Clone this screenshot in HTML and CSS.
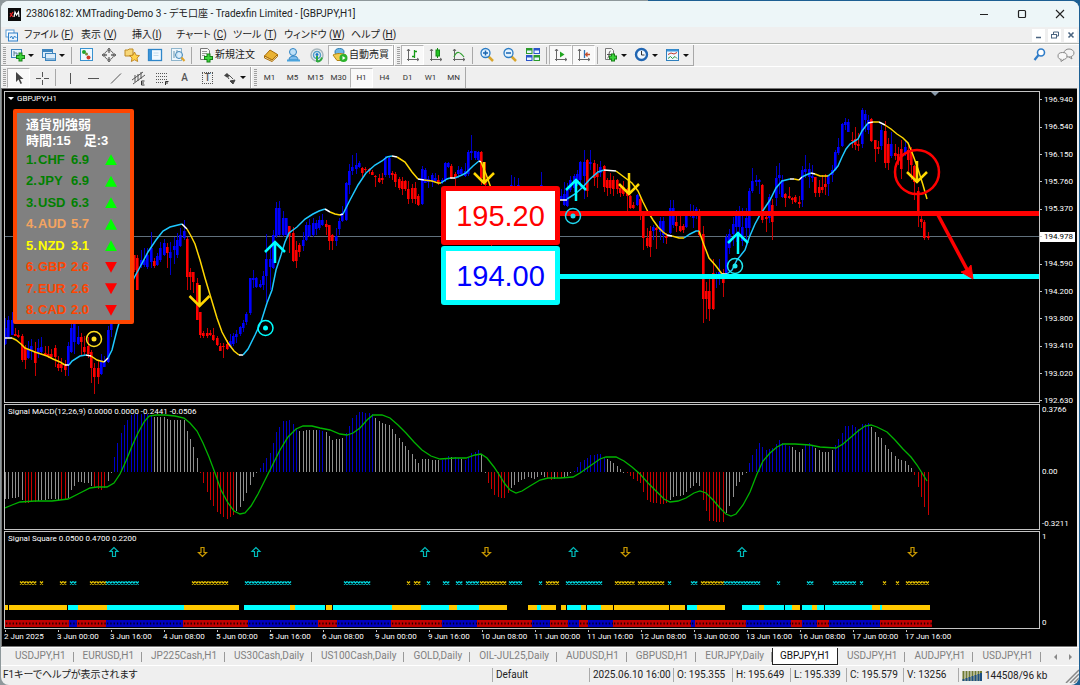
FILE: index.html
```html
<!DOCTYPE html>
<html lang="ja">
<head>
    <meta charset="UTF-8">
    <meta name="viewport" content="width=device-width, initial-scale=1.0">
    <title>23806182: XMTrading-Demo 3</title>
    <link rel="stylesheet" href="styles.css">
</head>
<body>

<div class="window">

    <header class="titlebar">
        <svg class="logo" width="13" height="13" viewBox="0 0 13 13"><rect width="13" height="13" fill="#0a0a0a"/><path d="M2 5l3 4M5 4L2 9" stroke="#e22" stroke-width="1.2"/><path d="M6 9l1-5 1.500 3L10.500 4l.5 5" stroke="#fff" stroke-width="1.2" fill="none"/></svg>
        <h1>23806182: XMTrading-Demo 3 - デモ口座 - Tradexfin Limited - [GBPJPY,H1]</h1>
        <div class="window-buttons">
            <button aria-label="Minimize"><svg width="10" height="10"><path d="M1 5.500h8" stroke="#222"/></svg></button>
            <button aria-label="Maximize"><svg width="10" height="10"><rect x="1.500" y="1.500" width="7" height="7" rx="1" fill="none" stroke="#222" stroke-width="1.200"/></svg></button>
            <button aria-label="Close"><svg width="10" height="10"><path d="M1 1l8 8M9 1L1 9" stroke="#222" stroke-width="1.100"/></svg></button>
        </div>
    </header>

    <nav class="menubar">
        <svg class="menu-icon" width="13" height="13" viewBox="0 0 13 13"><rect x="1" y="1" width="8" height="7" fill="#fff" stroke="#5b9bd5"/><rect x="3.500" y="4" width="9" height="8" fill="#e8f3fd" stroke="#2f7fc8"/><path d="M5 9l1.500-2L8 10l1.500-3 2 2" fill="none" stroke="#2f7fc8"/></svg>
        <button class="m-file">ファイル (<u>F</u>)</button>
        <button class="m-view">表示 (<u>V</u>)</button>
        <button class="m-insert">挿入(<u>I</u>)</button>
        <button class="m-file">チャート (<u>C</u>)</button>
        <button class="m-view">ツール (<u>T</u>)</button>
        <button class="m-window">ウィンドウ (<u>W</u>)</button>
        <button class="m-view">ヘルプ (<u>H</u>)</button>
        <div class="child-buttons">
            <button aria-label="Minimize chart"><svg width="8" height="8"><path d="M1 6.500h5" stroke="#4a6480" stroke-width="1.500"/></svg></button>
            <button aria-label="Restore chart"><svg width="8" height="8"><path d="M2.500 3V1h5v4H6" fill="none" stroke="#4a6480"/><rect x=".5" y="3.500" width="5" height="3.500" fill="none" stroke="#4a6480"/></svg></button>
            <button aria-label="Close chart"><svg width="8" height="8"><path d="M1.500 1.500l5 5M6.500 1.500l-5 5" stroke="#4a6480" stroke-width="1.600"/></svg></button>
        </div>
    </nav>

    <div class="toolbar">
        <div class="tools">
            <i class="grip"></i>
            <button class="tool drop" aria-label="New chart"><svg width="16" height="16"><rect x="1.500" y="2.500" width="10" height="8" fill="#e6f2fc" stroke="#3d84bd"/><path d="M4 4v5M4 6h3v3" fill="none" stroke="#5a7f9d"/><path d="M10.500 5.500v9M6 10h9" stroke="#168016" stroke-width="4"/><path d="M10.500 6.500v7M7 10h7" stroke="#3cd43c" stroke-width="2"/></svg></button>
            <button class="tool drop" aria-label="Profiles"><svg width="16" height="16"><rect x="1.500" y="2.500" width="10" height="8" fill="#dcecf9" stroke="#3d84bd"/><path d="M2 4h9" stroke="#3d84bd" stroke-width="2"/><rect x="4.500" y="6.500" width="10" height="7" fill="#dcecf9" stroke="#3d84bd"/><path d="M5 12h9" stroke="#8ab8dc" stroke-width="2"/></svg></button>
            <i class="sep"></i>
            <button class="tool" aria-label="Market watch"><svg width="16" height="16"><rect x="2.500" y="1.500" width="12" height="12" fill="#eef8ff" stroke="#3992cf"/><circle cx="6" cy="5" r="2" fill="#1fa52a"/><circle cx="8.500" cy="7" r="1.500" fill="#7b8d36"/><circle cx="10.500" cy="10.500" r="2" fill="#d33a26"/></svg></button>
            <button class="tool" aria-label="Data window"><svg width="16" height="16"><circle cx="8" cy="8" r="4.500" fill="none" stroke="#666"/><path d="M8 1v5M8 10v5M1 8h5M10 8h5" stroke="#666" stroke-width="1.300"/><path d="M6.500 3L8 1l1.500 2M6.500 13L8 15l1.500-2M3 6.500L1 8l2 1.500M13 6.500L15 8l-2 1.500" fill="none" stroke="#666"/></svg></button>
            <button class="tool" aria-label="Navigator"><svg width="16" height="16"><path d="M1 3h3l1-1h4v7H1z" fill="#f7d77a" stroke="#bd8a22"/><path d="M10.500 5l1.600 3.200 3.400.4-2.500 2.400.7 3.500-3.200-1.700-3.200 1.700.7-3.500-2.500-2.400 3.400-.4z" fill="#ffd24a" stroke="#b87912" stroke-width=".8"/></svg></button>
            <button class="tool" aria-label="Terminal"><svg width="16" height="16"><rect x="1.500" y="2.500" width="13" height="11" fill="#f2f9ff" stroke="#2f86c9" stroke-width="1.300"/><path d="M2 3h3v10H2z" fill="#3b94d9"/><path d="M6.500 6h5M6.500 8.500h5" stroke="#c4dcec"/></svg></button>
            <button class="tool" aria-label="Strategy tester"><svg width="16" height="16"><rect x="1.500" y="1.500" width="10" height="12" fill="#edf6fc" stroke="#8fb5cc"/><path d="M4 4v7M7 3v8" stroke="#6b95ad"/><circle cx="9" cy="8" r="3.500" fill="#d6ecfb" fill-opacity=".8" stroke="#4388b9"/><path d="M11.500 10.500l3 3.500" stroke="#e0a52c" stroke-width="2"/></svg></button>
            <i class="sep"></i>
            <button class="tool text"><svg width="16" height="16"><path d="M2.500 1.500h7l2 2v9h-9z" fill="#f7f7f7" stroke="#777"/><path d="M4 4.500h5M4 6.500h5M4 8.500h3" stroke="#999"/><path d="M10.500 6.500v9M6 11h9" stroke="#168016" stroke-width="4"/><path d="M10.500 7.500v7M7 11h7" stroke="#3cd43c" stroke-width="2"/></svg>新規注文</button>
            <button class="tool" aria-label="MetaEditor"><svg width="16" height="16"><path d="M1.500 9L7 3l7.500 4.500L9 13z" fill="#e9b233" stroke="#a96d0b"/><path d="M1.500 9v2L9 14.500l5.500-5V7.500L9 13z" fill="#f7dd9a" stroke="#a96d0b"/></svg></button>
            <button class="tool" aria-label="Community"><svg width="16" height="16"><circle cx="7" cy="5" r="3.500" fill="#bfe0f7" stroke="#2e83c2"/><path d="M3 13c0-3 2-4 5-4s4 2 4 4z" fill="#7dbcec" stroke="#2e83c2"/><path d="M1 13.500h13" stroke="#4aa4dd" stroke-width="2"/></svg></button>
            <button class="tool" aria-label="Signals"><svg width="16" height="16"><circle cx="8" cy="8" r="6" fill="none" stroke="#a8b7bd" stroke-width="1.500"/><circle cx="8" cy="8" r="3.500" fill="none" stroke="#4f9fc8" stroke-width="1.500"/><circle cx="8" cy="7.500" r="1.500" fill="#1878c8"/><path d="M8 9v6M8 14.500c3 0 4.500-2 5-4" fill="none" stroke="#30a840" stroke-width="2"/></svg></button>
            <button class="tool text on"><svg width="16" height="16"><ellipse cx="7.500" cy="5" rx="4.500" ry="3.500" fill="#6fb8e8" stroke="#2b79ad"/><path d="M1 8c4-2 9-2 13 0l-4 5.500H5z" fill="#f2cc4f" stroke="#b28413"/><circle cx="11.500" cy="11" r="4" fill="#2bb32b"/><path d="M10.500 9l3 2-3 2z" fill="#fff"/></svg>自動売買</button>
        </div>
        <div class="tools">
            <i class="grip"></i>
            <button class="tool on" aria-label="Bar chart"><svg width="16" height="16"><path d="M3.500 2v12M2 12.500h12M2 4l1.500-2L5 4M12 11l2 1.500L12 14" fill="none" stroke="#666"/><path d="M9.500 3v8M7 9.500h2.500M9.500 4.500H12" stroke="#159a15" stroke-width="1.300"/></svg></button>
            <button class="tool" aria-label="Candlesticks"><svg width="16" height="16"><path d="M3.500 2v12M2 12.500h12M2 4l1.500-2L5 4M12 11l2 1.500L12 14" fill="none" stroke="#666"/><path d="M9.500 1v10" stroke="#128a12"/><rect x="8" y="3" width="3.500" height="6" fill="#23c323" stroke="#128a12"/></svg></button>
            <button class="tool" aria-label="Line chart"><svg width="16" height="16"><path d="M3.500 2v12M2 12.500h12M2 4l1.500-2L5 4M12 11l2 1.500L12 14" fill="none" stroke="#666"/><path d="M3 10c3-7 6-5 10 0" fill="none" stroke="#2f9e2f" stroke-width="1.200"/></svg></button>
            <i class="sep"></i>
            <button class="tool" aria-label="Zoom in"><svg width="16" height="16"><path d="M9.500 9.500l4.500 4.500" stroke="#d9a52c" stroke-width="2.500"/><circle cx="6.500" cy="6" r="4.500" fill="#e3f3ff" stroke="#2c7cc4" stroke-width="1.300"/><path d="M4 6h5M6.500 3.500v5" stroke="#1d66b0" stroke-width="1.500"/></svg></button>
            <button class="tool" aria-label="Zoom out"><svg width="16" height="16"><path d="M9.500 9.500l4.500 4.500" stroke="#d9a52c" stroke-width="2.500"/><circle cx="6.500" cy="6" r="4.500" fill="#e3f3ff" stroke="#2c7cc4" stroke-width="1.300"/><path d="M4 6h5" stroke="#1d66b0" stroke-width="1.500"/></svg></button>
            <button class="tool" aria-label="Tile windows"><svg width="16" height="16"><path d="M1 1h6.500v6H1zM8.500 8H15v6H8.500z" fill="#2b9a2b"/><path d="M8.500 1H15v6H8.500zM1 8h6.500v6H1z" fill="#2b55c8"/><path d="M2 3.500h4.500v2.500H2zM9.500 3.500H14v2.500H9.500zM2 10.500h4.500V13H2zM9.500 10.500H14V13H9.500z" fill="#e9f4ff"/></svg></button>
            <i class="sep"></i>
            <button class="tool on" aria-label="Auto scroll"><svg width="16" height="16"><path d="M3.500 2v12M2 12.500h12M2 4l1.500-2L5 4M12 11l2 1.500L12 14" fill="none" stroke="#666"/><path d="M7 4.500l4.500 3L7 10.500z" fill="#1fa51f"/></svg></button>
            <button class="tool on" aria-label="Chart shift"><svg width="16" height="16"><path d="M3.500 2v12M2 12.500h12M2 4l1.500-2L5 4M12 11l2 1.500L12 14" fill="none" stroke="#666"/><path d="M8.500 3v8" stroke="#2e73b5" stroke-width="1.300"/><path d="M14 7.500h-4M11.500 5.500l-2 2 2 2" fill="none" stroke="#c4502c" stroke-width="1.300"/></svg></button>
            <i class="sep"></i>
            <button class="tool drop" aria-label="Indicators"><svg width="16" height="16"><path d="M2.500 1.500h6l2 2v9h-8z" fill="#f7f7f7" stroke="#777"/><path d="M4.500 11c2 0 1-7 3-7M4 7.500h4" fill="none" stroke="#555"/><path d="M10 6.500v8M6 10.500h8" stroke="#168016" stroke-width="4"/><path d="M10 7.500v6M7 10.500h6" stroke="#3cd43c" stroke-width="2"/></svg></button>
            <button class="tool drop" aria-label="Periods"><svg width="16" height="16"><circle cx="7.500" cy="7.500" r="5.500" fill="#f0f8ff" stroke="#2166b2" stroke-width="2.400"/><path d="M7.500 4v4h3" fill="none" stroke="#333"/></svg></button>
            <button class="tool drop" aria-label="Templates"><svg width="16" height="16"><rect x="1.500" y="2.500" width="12" height="11" fill="#eef7ff" stroke="#2f7fbd"/><path d="M2 3.500h11" stroke="#3b94d9" stroke-width="2"/><path d="M3 7.500l3-1.500 3 1 3-1.500" fill="none" stroke="#c0392b"/><path d="M3 11.500l2.500-2 2 2 2.500-2 2 2" fill="none" stroke="#2a9a3a"/></svg></button>
        </div>
        <div class="side-tools">
            <button class="tool" aria-label="Search"><svg width="16" height="16"><circle cx="9" cy="5.500" r="3.500" fill="#fff" stroke="#2f7cc8" stroke-width="1.600"/><path d="M6.500 8L2.500 13" stroke="#2f7cc8" stroke-width="2.200"/></svg></button>
            <button class="tool" aria-label="Chat"><svg width="18" height="16"><ellipse cx="12" cy="6" rx="5" ry="4" fill="#f4f4f4" stroke="#888"/><path d="M14 9.500l1 2.500-3-2" fill="#f4f4f4" stroke="#888"/><ellipse cx="5.500" cy="9" rx="4.500" ry="3.500" fill="#f8f8f8" stroke="#888"/><path d="M4 12v2.500l3-2" fill="#f8f8f8" stroke="#888"/></svg></button>
        </div>
    </div>

    <div class="toolbar lines">
        <div class="tools">
            <i class="grip"></i>
            <button class="tool on" aria-label="Cursor"><svg width="16" height="16"><path d="M5 2v10l2.500-2.500L9.500 14l1.500-.7-2-4.300h3.500z" fill="#444"/></svg></button>
            <button class="tool" aria-label="Crosshair"><svg width="16" height="16"><path d="M8.500 2v5M8.500 10v5M2 8.500h5M10 8.500h5" stroke="#555"/></svg></button>
            <i class="sep"></i>
            <button class="tool" aria-label="Vertical line"><svg width="16" height="16"><path d="M8.500 3v11" stroke="#555"/></svg></button>
            <button class="tool" aria-label="Horizontal line"><svg width="16" height="16"><path d="M3 8.500h11" stroke="#555"/></svg></button>
            <button class="tool" aria-label="Trendline"><svg width="16" height="16"><path d="M3 13.500L13 3.500" stroke="#555"/></svg></button>
            <button class="tool" aria-label="Channel"><svg width="16" height="16"><path d="M1 10l11-8M2 14l12-9M4 5v7M7 4v7M10 2v7" stroke="#555"/><path d="M13.500 11h-3v4h3M10.500 13h2.500" fill="none" stroke="#333"/></svg></button>
            <button class="tool" aria-label="Fibonacci"><svg width="16" height="16"><path d="M2 3.500h12M2 6.500h12M2 9.500h12M2 12.500h7" stroke="#555" stroke-dasharray="1 1"/><path d="M11.500 15v-3.500h3M11.500 13h2.500" fill="none" stroke="#333"/></svg></button>
            <button class="tool letter">A</button>
            <button class="tool label"><span>T</span></button>
            <button class="tool drop" aria-label="Arrows"><svg width="16" height="16"><path d="M2 5.500L5 3l3 3-3 1.500z" fill="#444"/><path d="M5 6l2 3M8 11l5-1-2 4z" fill="#444" stroke="#444"/><path d="M7 5l4 4" stroke="#555"/></svg></button>
        </div>
        <div class="tools periods">
            <i class="grip"></i>
            <button class="tool">M1</button>
            <button class="tool">M5</button>
            <button class="tool">M15</button>
            <button class="tool">M30</button>
            <button class="tool on">H1</button>
            <button class="tool">H4</button>
            <button class="tool">D1</button>
            <button class="tool">W1</button>
            <button class="tool">MN</button>
        </div>
    </div>

    <main class="charts">
        <section class="pane price">
            <div class="plot">
                <svg id="priceChart"></svg>
                <h2 class="caption symbol">GBPJPY,H1</h2>
                <div class="strength">
                    <p>通貨別強弱</p>
                    <p>時間:15　足:3</p>
                    <table>
                        <tr class="strong"><td class="rank">1.</td><th>CHF</th><td>6.9</td><td><i class="up"></i></td></tr>
                        <tr class="strong"><td class="rank">2.</td><th>JPY</th><td>6.9</td><td><i class="up"></i></td></tr>
                        <tr class="strong"><td class="rank">3.</td><th>USD</th><td>6.3</td><td><i class="up"></i></td></tr>
                        <tr class="middle"><td class="rank">4.</td><th>AUD</th><td>5.7</td><td><i class="up"></i></td></tr>
                        <tr class="yellow"><td class="rank">5.</td><th>NZD</th><td>3.1</td><td><i class="up"></i></td></tr>
                        <tr class="weak"><td class="rank">6.</td><th>GBP</th><td>2.6</td><td><i class="down"></i></td></tr>
                        <tr class="weak"><td class="rank">7.</td><th>EUR</th><td>2.6</td><td><i class="down"></i></td></tr>
                        <tr class="weak"><td class="rank">8.</td><th>CAD</th><td>2.0</td><td><i class="down"></i></td></tr>
                    </table>
                </div>
                <div class="levels">
                    <div class="level entry">195.20</div>
                    <div class="level target">194.00</div>
                </div>
            </div>
            <div class="axis ticks">
                <span>196.940</span><span>196.540</span><span>196.150</span><span>195.760</span><span>195.370</span><span class="current">194.978</span><span>194.590</span><span>194.200</span><span>193.800</span><span>193.410</span><span>193.020</span><span>192.630</span>
            </div>
        </section>

        <section class="pane macd">
            <div class="plot">
                <svg id="macdChart"></svg>
                <h2 class="caption">Signal MACD(12,26,9) 0.0000 0.0000 -0.2441 -0.0506</h2>
            </div>
            <div class="axis"><span>0.3766</span><span class="zero">0.00</span><span>-0.3211</span></div>
        </section>

        <section class="pane square">
            <div class="plot">
                <svg id="squareChart"></svg>
                <h2 class="caption">Signal Square 0.0500 0.4700 0.2200</h2>
            </div>
            <div class="axis"><span>1</span><span>0</span></div>
        </section>

        <div class="dates">
            <span>2 Jun 2025</span><span>3 Jun 00:00</span><span>3 Jun 16:00</span><span>4 Jun 08:00</span><span>5 Jun 00:00</span><span>5 Jun 16:00</span><span>6 Jun 08:00</span><span>9 Jun 00:00</span><span>9 Jun 16:00</span><span>10 Jun 08:00</span><span>11 Jun 00:00</span><span>11 Jun 16:00</span><span>12 Jun 08:00</span><span>13 Jun 00:00</span><span>13 Jun 16:00</span><span>16 Jun 08:00</span><span>17 Jun 00:00</span><span>17 Jun 16:00</span>
        </div>
    </main>

    <nav class="tabs">
        <a href="#">USDJPY,H1</a>
        <a href="#">EURUSD,H1</a>
        <a href="#">JP225Cash,H1</a>
        <a href="#">US30Cash,Daily</a>
        <a href="#">US100Cash,Daily</a>
        <a href="#">GOLD,Daily</a>
        <a href="#">OIL-JUL25,Daily</a>
        <a href="#">AUDUSD,H1</a>
        <a href="#">GBPUSD,H1</a>
        <a href="#">EURJPY,Daily</a>
        <a href="#" class="active">GBPJPY,H1</a>
        <a href="#">USDJPY,H1</a>
        <a href="#">AUDJPY,H1</a>
        <a href="#">USDJPY,H1</a>
        <div class="tab-scroll">
            <button aria-label="Scroll left"><svg width="5" height="6"><path d="M4 0v6L1 3z" fill="#888"/></svg></button>
            <button aria-label="Scroll right"><svg width="5" height="6"><path d="M1 0v6l3-3z" fill="#888"/></svg></button>
        </div>
    </nav>

    <footer class="status">
        <span>F1キーでヘルプが表示されます</span>
        <span>Default</span>
        <span>2025.06.10 16:00</span>
        <span>O: 195.355</span>
        <span>H: 195.649</span>
        <span>L: 195.339</span>
        <span>C: 195.579</span>
        <span>V: 13256</span>
        <span class="traffic"><svg width="20" height="12"><path d="M1.500 1v10M4.500 1v10M7.500 1v10M10.500 1v10M13.500 1v10M16.500 1v10M19 1v10" stroke="#6f7a33" stroke-width="2"/><path d="M1.500 9v2M4.500 8v3M7.500 7v4M10.500 6v5M13.500 5v6M16.500 4v7M19 3v8" stroke="#1d4f82" stroke-width="2"/></svg>144508/96 kb<svg class="resize" width="14" height="14"><path d="M1 14L14 1M5 14l9-9M9 14l5-5" stroke="#888" stroke-width="1.500"/></svg></span>
    </footer>

</div>

<script src="chart.js"></script>
</body>
</html>
```

FILE: styles.css
```css
* {
    box-sizing: border-box;
}

body {
    margin: 0;
    padding: 1px;
    background: linear-gradient(90deg, #8e989b 60%, #1d5f93 60%);
    font-family: Roboto, "Noto Sans CJK JP", sans-serif;
    font-size: 10px;
    line-height: 14px;
    color: #222;
}

button {
    padding: 0;
    border: none;
    background: none;
    color: inherit;
    font: inherit;
}

svg {
    display: block;
    flex: none;
}

h1, h2, p {
    margin: 0;
    font-weight: normal;
}

.window {
    display: flex;
    flex-direction: column;
    background: #efefef;
    border-radius: 8px;
    overflow: hidden;
}

/* title and menu */
.titlebar {
    display: flex;
    align-items: center;
    height: 26px;
    padding-left: 7px;
    background: #edf6f8;
    font-feature-settings: "palt";
}

.titlebar h1 {
    flex: 1;
    margin-left: 5px;
    font-size: 10px;
    white-space: nowrap;
}

.window-buttons {
    display: flex;
}

.window-buttons button {
    display: grid;
    place-items: center;
    width: 38px;
    height: 26px;
}

.menubar {
    display: flex;
    align-items: center;
    height: 17px;
    padding-left: 4px;
    border-bottom: 1px solid #b0b4b0;
    font-feature-settings: "palt";
}

.menu-icon {
    margin-right: 6px;
}

.menubar > button {
    text-align: left;
    white-space: nowrap;
}

.m-insert {
    width: 44px;
}

.m-view {
    width: 51px;
}

.m-file {
    width: 57px;
}

.m-window {
    width: 67px;
}

.child-buttons {
    display: flex;
    gap: 3px;
    margin-left: auto;
    padding-right: 2px;
}

.child-buttons button {
    display: grid;
    place-items: center;
    width: 13px;
    height: 13px;
    background: #fff;
}

/* toolbars */
.toolbar {
    display: flex;
    height: 22px;
    border-top: 1px solid #fff;
}

.tools {
    display: flex;
    align-items: center;
    border-right: 1px solid #a8a8a8;
    border-bottom: 1px solid #a8a8a8;
}

.tools + .tools {
    border-left: 1px solid #fff;
}

.lines .tools {
    border-bottom: none;
}

.grip {
    width: 3px;
    height: 17px;
    margin: 0 1px 0 2px;
    background: repeating-linear-gradient(#a0a0a0 0 1px, #efefef 1px 2px);
}

.sep {
    width: 1px;
    height: 17px;
    margin: 0 2px;
    background: #a8a8a8;
}

.tool {
    display: flex;
    align-items: center;
    justify-content: center;
    width: 23px;
    height: 20px;
    white-space: nowrap;
}

.tool.drop {
    justify-content: flex-start;
    gap: 2px;
    width: 31px;
    padding-left: 3px;
}

.tool.drop::after {
    content: "";
    border: 3px solid transparent;
    border-top-color: #111;
    border-bottom: none;
}

.tool.text {
    width: 65px;
    gap: 1px;
}

.tool.on {
    background: #f9f9f9;
    border: 1px solid #b4b4b4;
    border-right-color: #fff;
    border-bottom-color: #fff;
}

.tool.letter {
    font-weight: 500;
    color: #555;
}

.tool.label span {
    width: 11px;
    border: 1px dotted #555;
    font-weight: 500;
    line-height: 10px;
    color: #555;
}

.periods .tool {
    font-size: 8px;
    color: #333;
}

.side-tools {
    display: flex;
    gap: 3px;
    margin-left: auto;
    padding-right: 2px;
}

/* charts */
.charts {
    margin-right: 2px;
    padding: 2px;
    border: 1px solid #777;
    border-width: 1px 0 1px 1px;
    background: #000;
    color: #fff;
    font-size: 8px;
    line-height: 10px;
}

.pane {
    display: grid;
    grid-template-columns: 1fr 35px;
    grid-template-rows: 100%;
    margin-bottom: 1px;
}

.price {
    height: 312px;
}

.macd {
    height: 126px;
}

.square {
    height: 98px;
    margin: 0;
}

.plot {
    position: relative;
    min-width: 0;
    border: 1px solid #c4c4c4;
}

.plot > svg {
    width: 100%;
    height: 100%;
}

.caption {
    position: absolute;
    top: 2px;
    left: 3px;
    font-size: 8px;
    line-height: 10px;
}

.symbol::before {
    content: "";
    display: inline-block;
    margin-right: 3px;
    border: 3px solid transparent;
    border-top-color: #fff;
    border-bottom: none;
    vertical-align: middle;
}

.axis {
    display: flex;
    flex-direction: column;
    justify-content: space-between;
    padding: 1px 0 1px 2px;
}

.zero {
    margin-top: 10px;
}

.ticks {
    padding: 4px 0 0;
    margin-bottom: -3px;
}

.ticks span::before {
    content: "";
    display: inline-block;
    width: 2px;
    height: 1px;
    margin-right: 2px;
    background: #c4c4c4;
    vertical-align: middle;
}

.ticks .current {
    background: #fff;
    color: #000;
}

.dates {
    display: flex;
    height: 15px;
    padding-top: 1px;
}

.dates span {
    width: 53px;
    padding-top: 2px;
    white-space: nowrap;
    background: linear-gradient(#c4c4c4, #c4c4c4) 1px 0 / 1px 2px no-repeat;
}

.strength {
    position: absolute;
    top: 17px;
    left: 8px;
    width: 121px;
    height: 215px;
    padding: 4px 0 0 9px;
    border: 4px solid #ff4500;
    border-radius: 2px;
    background: #808080;
    font: bold 13px/16px "Liberation Sans", "Noto Sans CJK JP", sans-serif;
}

.strength p {
    font-weight: bold;
}

.strength table {
    height: 172px;
    border-collapse: collapse;
}

.strength th,
.strength td {
    width: 34px;
    padding: 0;
    text-align: left;
    font-size: 13px;
    line-height: 16px;
}

.strength th {
    width: 33px;
}

.strength .rank {
    width: 12px;
}

.strength td:last-child {
    width: 12px;
}

.strong { color: #008000; }
.middle { color: #f4a460; }
.yellow { color: #ffff00; }
.weak { color: #ff4500; }

.up,
.down {
    display: block;
    width: 12px;
    height: 11px;
    background: #00ff00;
    clip-path: polygon(50% 0, 100% 100%, 0 100%);
}

.down {
    background: #ff0000;
    clip-path: polygon(0 0, 100% 0, 50% 100%);
}

.levels {
    position: absolute;
    top: 94px;
    left: 436px;
}

.level {
    width: 119px;
    height: 59px;
    margin-bottom: 1px;
    border: 5px solid #ff0000;
    border-radius: 3px;
    background: #fff;
    color: #ff0000;
    font: 29px/50px "Liberation Sans", sans-serif;
    text-align: center;
}

.target {
    border-color: #00ffff;
    color: #0000ff;
}

/* chart tabs */
.tabs {
    display: flex;
    height: 18px;
    padding-left: 5px;
    border-top: 1px solid #fff;
}

.tabs a {
    padding: 0 8px 0 9px;
    line-height: 15px;
    color: #808080;
    text-decoration: none;
    white-space: nowrap;
    background: linear-gradient(#999, #999) right 4px / 1px 10px no-repeat;
}

.tabs .active {
    padding: 0 7px;
    background: #fff;
    border: 1px solid #222;
    border-top: none;
    color: #111;
}

.tab-scroll {
    display: flex;
    gap: 10px;
    margin-left: auto;
    padding-right: 6px;
}

/* status bar */
.status {
    display: grid;
    grid-template-columns: 1fr 97px 84px 59px 58px 56px 57px 55px 121px;
    height: 20px;
    border-top: 1px solid #fff;
    line-height: 18px;
    white-space: nowrap;
}

.status span {
    padding-left: 4px;
    background: linear-gradient(#aaa, #aaa) 0 2px / 1px 14px no-repeat;
}

.status span:first-child {
    padding-left: 2px;
    background: none;
    font-feature-settings: "palt";
}

.traffic {
    display: flex;
    align-items: center;
    gap: 3px;
}

.resize {
    margin-left: auto;
}
```

FILE: chart.js
```js
var STEP = 3.307;   // distance between two bars
var LEFT = 5;

function svgGroup(id, top) {
    var g = document.createElementNS('http://www.w3.org/2000/svg', 'g');
    g.setAttribute('transform', 'translate(-' + LEFT + ' -' + top + ')');
    document.getElementById(id).appendChild(g);
    return g;
}

function add(parent, tag, attrs) {
    var el = document.createElementNS('http://www.w3.org/2000/svg', tag);
    for (var key in attrs) el.setAttribute(key, attrs[key]);
    parent.appendChild(el);
    return el;
}

function path(parent, d, color, width) {
    return add(parent, 'path', { d: d, fill: 'none', stroke: color, 'stroke-width': width || 1 });
}

function barX(i) {
    return LEFT + Math.round(i * STEP);
}

/* ---------- price ---------- */

// colour, high, body top, body bottom, low
var candles = [
    { start: 0, rows: 'b228,238,254,255 b226,230,247,248 b222,230,245,245 r238,244,246,246 r240,245,247,248 r244,246,270,272 r255,258,270,279 b251,260,268,269 b249,256,261,270 r252,262,273,286 b249,258,263,268 b247,257,262,264 r256,263,266,266 r256,264,267,268 r259,264,267,268 r255,258,267,277 r266,274,278,281 r268,274,278,282 r270,274,280,286 b252,256,275,286 b232,238,262,263 b232,234,252,264 b236,247,254,255 r243,247,252,265 r246,257,262,265 r247,256,264,268 r260,262,278,293 r273,278,287,304 r271,278,287,294 b264,270,284,285 b266,271,277,277 b236,240,272,273 b225,234,240,247' },
    { start: 39, rows: 'r165,165,180,182 r165,168,200,200 b160,170,175,178 b158,170,175,177 b158,165,177,179 b142,158,172,178 r168,171,176,178 b163,166,175,176 b152,158,170,172 b149,153,165,166 r153,157,163,178 b152,162,168,185 b147,156,160,174 b143,150,165,168 b138,145,156,157 b130,141,148,150 r147,149,187,200 r178,182,187,200 r182,182,192,203 r188,193,230,230 r222,222,245,248 r241,243,246,248 r238,243,246,248 r240,243,245,246 r238,245,250,251 r246,248,255,256 r253,256,261,261 r253,256,257,268 r250,254,259,260 b244,251,257,258 b243,246,254,256 b240,244,247,253 b236,237,244,246 b230,233,238,242 b222,224,232,235 b188,188,223,225 b180,188,190,198 b187,188,197,198 b190,194,197,198 b181,186,195,200 b144,169,186,212 b158,169,177,200 b140,145,178,179 b112,118,146,148 b111,118,145,146 b121,128,145,147 b128,128,145,146 r136,136,146,163 r137,143,171,172 r151,160,171,178 r153,155,162,167 b142,150,156,161 b132,135,150,151 b129,135,146,147 b128,133,145,147 b130,133,139,145 b126,130,138,140 b124,130,135,136 r130,134,137,145 r135,135,151,160 r144,145,151,160 b138,146,151,156 b128,131,139,145 b116,123,131,132 b92,93,130,131 b74,81,95,104 b65,77,81,85 b63,75,79,84 b71,73,77,78 r77,78,83,87 r77,79,80,82 r78,79,81,84 r80,82,85,85 r85,86,87,97 r84,88,92,93 r83,88,90,94 b66,68,85,87 b66,68,85,88 r81,83,85,90 r82,84,92,97 r87,89,98,100 r87,91,99,105 r90,91,99,101 r91,99,109,114 r94,98,109,113 r92,98,109,114 r104,106,115,116 b76,79,114,115 b78,80,93,93 b86,89,92,98 b83,85,92,97 b83,88,91,92 r85,90,92,95 b88,90,92,94 b72,73,90,92 b72,73,77,78 r74,76,88,89 r82,84,88,96 b76,80,84,88 b77,79,84,86 b73,81,86,87 b60,62,84,86 b45,61,63,70 b61,61,68,70 b61,62,70,72 r61,62,88,95 r72,90,95,96' },
    { start: 147, rows: 'r98,100,150,157' },
    { start: 153, rows: 'b85,95,100,102 b87,96,100,102 b88,95,100,102' },
    { start: 162, rows: 'b82,95,100,102 b96,97,100,102' },
    { start: 168, rows: 'b99,106,109,110 b92,104,115,116 b93,98,116,117 b86,90,100,102 b84,86,98,102 b80,84,95,96 b71,72,90,98 b60,72,86,109 r69,70,101,107 b60,72,74,80 r70,73,88,96 r74,83,87,98 b71,77,83,87 r75,76,97,102 r88,90,98,106 r83,90,98,104 r86,90,99,106 r89,90,99,104 r96,98,103,107 r91,97,104,106 r98,99,106,121 r105,106,118,119 r112,115,118,119 b104,105,115,116 r107,109,125,130 r121,125,148,160 r138,148,156,158 r136,141,157,167 b135,137,141,150 r137,138,140,159 b127,131,142,150 b127,131,145,153 r143,146,148,154 b110,118,143,144 b110,118,135,138 r124,132,136,142 r125,136,141,142 r134,136,140,143 b122,126,137,138 b114,121,125,127 b115,125,128,138 b117,119,125,129 r119,124,145,147 r136,144,209,233 r192,201,209,229 r188,201,219,231 r169,183,219,220 b182,184,188,198 b169,182,188,195 r179,184,193,207 b144,147,183,184 b139,144,158,164 b127,134,144,156 b120,125,137,152 b116,124,137,144 b118,137,151,156 b118,128,138,154 b98,101,138,146 b78,91,101,103 b85,90,92,96 b89,90,92,104 r94,95,130,133 r125,127,129,142 b104,107,128,133 r109,115,132,150 b76,88,108,116 b73,85,88,104 b85,90,107,108 r103,104,108,117 r97,106,108,109 r107,108,110,114 r105,107,112,113 r106,112,114,118 b76,80,110,117 b65,79,82,88 b73,79,87,98 b75,86,88,92 r87,87,103,107 r90,97,103,107 r85,97,100,103 r84,94,97,105 b85,85,94,106 b75,80,85,92 b60,62,80,81 b48,57,63,65 b33,34,56,57 b28,32,35,40 b29,32,42,42 r42,50,51,58 r37,49,55,60 r43,54,56,61 b18,20,54,58 b20,24,30,42 b25,30,40,44 r28,29,51,52 r50,50,59,72 r51,57,59,64 b35,40,56,60 r31,41,73,78 r48,54,73,80 b42,54,66,68 r54,63,66,70 r57,64,70,75 r50,59,79,89 b51,57,64,66 r56,60,70,81 r57,60,75,90 r75,76,92,110 r97,101,126,137 r126,129,132,138 r130,132,148,150 r142,146,148,150' }
];

// w = turning, y = falling, c = rising
var average = [
    'w5,248 12,248', 'y12,248 16,250 21,254 25,258 30,260 35,262 41,264 47,266 53,269 60,272 65,275',
    'w65,275 69,275', 'c69,275 72,271 80,266 86,265', 'w86,265 91,266', 'y91,266 97,270 104,272', 'w104,272 108,268',
    'c108,268 112,260 117,240 120,230 128,203 134,188 140,177 148,162 156,150 163,141 170,137 178,135 182,134',
    'w182,134 187,139', 'y187,139 191,146 195,154 200,170 205,188 211,208 217,228 222,242 228,253 234,261 239,265', 'w239,265 243,265',
    'c243,265 248,259 255,245 261,232 267,213 272,200 276,180 281,165 285,152 289,143 297,137 305,129 313,124 319,121 325,119',
    'w325,119 330,122', 'y330,122 335,124 340,125', 'w340,125 343,124',
    'c343,124 350,110 358,95 366,83 375,75 382,71 387,67 392,66', 'w392,66 397,67', 'y397,67 405,72 412,82 418,89', 'w418,89 424,90',
    'y424,90 432,91 438,93 441,93', 'c441,93 447,89 450,88', 'w450,88 455,88', 'c455,88 462,85 466,83 473,76 479,71', 'w479,71 481,72',
    'y481,72 486,84 491,98', 'w559,110 567,110', 'c567,109 575,104 583,97 590,89 598,82 604,80', 'w604,80 616,81',
    'y616,81 624,87 632,93 638,101 643,112 648,122 653,130 658,137 663,142 667,145', 'w667,145 672,146', 'y672,146 679,148 684,148',
    'c684,148 690,144 696,141 699,141', 'y699,141 704,155 709,168 716,176 722,184', 'w722,184 727,184',
    'c727,184 732,180 737,170 745,160 749,148 755,134 760,125 764,119 770,110 776,98 782,91 790,89', 'w790,89 794,89', 'y794,89 799,90', 'w799,90 802,87',
    'c802,87 806,85 811,83', 'w811,83 815,84', 'y815,84 820,86 828,86', 'c828,86 833,82 838,76 842,67 846,59 850,54 858,49 862,41 868,33',
    'w868,33 873,32', 'y873,32 879,32', 'w879,32 885,35', 'y885,35 891,39 897,44 903,48 908,53 913,65 918,79 923,95 927,109'
];

function drawPrice() {
    var g = svgGroup('priceChart', 2);
    var x2 = 5000;

    path(g, 'M5 146.500H' + x2, '#60707c');

    candles.forEach(function (part) {
        part.rows.split(' ').forEach(function (row, n) {
            var v = row.slice(1).split(',').map(Number);
            var blue = row[0] === 'b';
            var x = barX(part.start + n);
            add(g, 'rect', { x: x, y: v[0], width: 1, height: v[3] - v[0], fill: blue ? '#0000c8' : '#c80000' });
            add(g, 'rect', { x: x - 1, y: v[1], width: 2.600, height: Math.max(v[2] - v[1], 1), fill: blue ? '#0000ff' : '#ff0000' });
        });
    });

    average.forEach(function (line) {
        var color = { w: '#ffffff', y: '#ffd700', c: '#1ec8ff' }[line[0]];
        path(g, 'M' + line.slice(1), color, 1.5);
    });

    path(g, 'M559 123.500H' + x2, '#ff0000', 5);
    path(g, 'M559 186.500H' + x2, '#00ffff', 5);

    [[94, 249, '#ffe020'], [265.5, 238, '#00ffff'], [573, 126, '#20d8f0'], [735, 176, '#20e8f0']].forEach(function (c) {
        add(g, 'circle', { cx: c[0], cy: c[1], r: 7.5, fill: 'none', stroke: c[2], 'stroke-width': 1.5 });
        add(g, 'circle', { cx: c[0], cy: c[1], r: 2.5, fill: c[2] });
    });

    // trade arrows: x, tip, direction
    [[199.5, 216, -1], [484, 93, -1], [629, 104, -1], [917, 92, -1], [275, 152, 1], [576, 90, 1], [738, 143, 1]].forEach(function (a) {
        var d = 'M' + a[0] + ' ' + a[1] + 'v' + 21 * a[2] + 'M' + (a[0] - 10) + ' ' + (a[1] + 10 * a[2]) + 'l10 ' + -10 * a[2] + 'l10 ' + 10 * a[2];
        path(g, d, a[2] > 0 ? '#00ffff' : '#ffd700', 2.5);
    });

    add(g, 'circle', { cx: 917, cy: 82, r: 22, fill: 'none', stroke: '#ff0000', 'stroke-width': 2.5 });
    path(g, 'M938 125L970 185', '#ff0000', 3.5);
    add(g, 'path', { d: 'M973 189l-12-7 6-2 4-5z', fill: '#ff0000', stroke: '#ff0000' });
    add(g, 'path', { d: 'M931 2h8l-4 4z', fill: '#8899aa' });
}

/* ---------- MACD ---------- */

// bar index, y of the bar end
var macd = [[0, 499], [3, 498], [4, 497], [6, 503], [9, 502], [11, 500], [14, 499], [17, 500], [19, 498], [20, 490], [22, 482], [25, 483], [27, 488], [29, 490], [30, 488], [31, 481], [32, 472], [33, 457], [34, 443], [35, 433], [36, 425], [37, 420], [38, 415], [39, 414], [43, 414], [45, 417], [48, 417], [50, 420], [54, 420], [55, 431], [57, 447], [58, 458], [59, 472], [60, 483], [62, 500], [64, 512], [67, 519], [69, 515], [71, 507], [72, 501], [74, 485], [75, 477], [76, 472], [77, 468], [78, 463], [80, 453], [82, 432], [84, 421], [86, 420], [88, 428], [89, 431], [92, 430], [95, 430], [97, 432], [99, 440], [102, 438], [103, 433], [105, 418], [107, 412], [108, 412], [111, 414], [112, 418], [114, 423], [116, 425], [117, 429], [119, 438], [121, 446], [123, 454], [125, 463], [126, 459], [132, 460], [134, 456], [137, 458], [139, 460], [141, 453], [143, 450], [144, 455], [145, 472], [146, 483], [148, 495], [150, 498], [151, 498], [153, 488], [155, 482], [158, 477], [160, 479], [162, 475], [164, 478], [165, 480], [167, 478], [169, 478], [171, 473], [172, 471], [174, 462], [176, 458], [177, 455], [180, 454], [182, 459], [184, 463], [186, 469], [187, 472], [188, 473], [190, 479], [192, 483], [194, 500], [196, 503], [199, 504], [200, 503], [202, 497], [205, 495], [207, 488], [209, 483], [210, 486], [211, 500], [213, 521], [217, 522], [218, 513], [219, 506], [220, 497], [221, 486], [222, 482], [223, 475], [224, 472], [225, 463], [226, 455], [228, 443], [230, 450], [232, 448], [234, 440], [236, 445], [238, 447], [240, 452], [242, 445], [243, 443], [245, 448], [247, 452], [249, 452], [250, 450], [251, 445], [253, 433], [254, 426], [256, 425], [258, 429], [259, 424], [261, 423], [262, 427], [264, 437], [265, 438], [266, 445], [268, 452], [270, 459], [272, 461], [274, 468], [275, 475], [276, 487], [277, 497], [278, 507], [279, 515]];

// first bar of each colour run
var macdColors = [[0, 'g'], [6, 'r'], [10, 'g'], [17, 'r'], [19, 'g'], [27, 'r'], [31, 'g'], [33, 'b'], [45, 'g'], [59, 'r'], [70, 'g'], [77, 'b'], [89, 'g'], [95, 'b'], [97, 'g'], [103, 'b'], [112, 'g'], [132, 'b'], [135, 'g'], [136, 'b'], [138, 'g'], [139, 'b'], [144, 'g'], [146, 'r'], [153, 'g'], [164, 'r'], [166, 'g'], [167, 'r'], [169, 'g'], [172, 'b'], [182, 'g'], [188, 'r'], [201, 'g'], [211, 'r'], [218, 'g'], [225, 'b'], [238, 'g'], [242, 'b'], [245, 'g'], [251, 'b'], [262, 'g'], [275, 'r']];

var signalLine = '5,508 12,505 20,502 35,501 52,501 68,499 80,493 90,488 97,487 107,487 114,483 120,474 126,461 132,446 138,433 144,422 149,416 156,415 165,415 175,416 184,418 190,423 197,431 203,443 209,457 215,473 221,490 228,503 234,511 240,514 245,513 251,506 258,494 265,480 272,466 280,450 288,437 296,429 303,426 312,426 320,428 330,430 340,434 347,435 353,433 360,428 367,420 373,415 382,415 390,418 398,425 406,433 414,442 422,450 431,456 440,459 455,458 466,458 475,455 481,454 487,458 494,467 500,476 505,484 510,490 516,493 522,491 530,486 540,480 548,478 560,478 573,477 580,473 590,466 600,459 606,457 616,457 624,461 632,467 640,474 648,483 656,491 664,499 670,502 678,501 686,498 694,493 700,491 706,493 713,500 720,508 726,514 731,516 736,514 743,505 750,492 757,474 763,461 770,453 777,447 783,444 795,444 810,445 820,447 836,448 843,444 850,438 858,431 865,426 871,425 877,427 887,432 895,440 903,449 911,457 917,465 922,473 927,481';

function drawMacd() {
    var g = svgGroup('macdChart', 405);
    var zero = 472;
    var colors = { g: '#909090', r: '#c80000', b: '#0000c8' };
    var k = 0, c = 0;
    for (var i = 0; i < 280; i++) {
        while (k < macd.length - 2 && macd[k + 1][0] <= i) k++;
        while (c < macdColors.length - 1 && macdColors[c + 1][0] <= i) c++;
        var a = macd[k], b = macd[k + 1];
        var y = Math.round(a[1] + (b[1] - a[1]) * (i - a[0]) / (b[0] - a[0]));
        add(g, 'rect', { x: barX(i), y: Math.min(y, zero), width: 1, height: Math.max(Math.abs(y - zero), 1), fill: colors[macdColors[c][1]] });
    }
    path(g, 'M' + signalLine, '#00b400', 1.3);
}

/* ---------- signal square ---------- */

var crosses = 'y20-34 y40-42 y60-65 c70-74 y90-104 c106-136 y192-226 c245-288 c344-368 y407-409 y414-418 c427-429 c443-448 c456-461 c466-478 y480-504 c509-520 c539-541 y546-556 c566-600 y615-633 y638-662 c668-670 c691-696 y701-721 c724-758 c777-779 c807-811 c833-854 c860-862 y883-885 y896-898 y906-927';
var bars = 'y5-8 y9-67 c68-78 y78-107 c107-184 y184-239 c244-290 y290-295 c295-325 y326-332 c333-392 y392-421 c421-449 y449-457 c457-479 y479-507 y528-537 c537-541 y541-556 y561-566 c567-581 y581-586 c587-601 y601-613 y614-669 y670-685 c687-697 y697-725 c742-759 y759-764 c764-784 c785-792 y792-800 c802-812 y812-817 c817-824 c825-872 y872-880 c880-882 y882-930';
var strip = 'r5-69 b69-77 r77-106 b106-183 r183-248 b248-318 r318-337 b337-391 r391-442 b442-477 r477-532 b532-550 r550-568 b568-579 r579-588 b588-613 r613-691 b691-695 r695-746 b746-791 r791-802 b802-817 r817-829 b829-880 r880-932';

function ranges(text, draw) {
    text.split(' ').forEach(function (item) {
        var v = item.slice(1).split('-').map(Number);
        draw(item[0], v[0], v[1]);
    });
}

function drawSquare() {
    var g = svgGroup('squareChart', 532);
    var colors = { y: '#ffc800', c: '#00ffff', r: '#c00000', b: '#0000c0' };

    ranges(crosses, function (color, from, to) {
        for (var x = from; x <= to; x += STEP) {
            path(g, 'M' + x + ' 581.500l3 3m0 -3l-3 3', color === 'y' ? '#e6c000' : '#00d8e0', 1.3);
        }
    });
    ranges(bars, function (color, from, to) {
        add(g, 'rect', { x: from, y: 605, width: to - from, height: 5, fill: colors[color] });
    });
    ranges(strip, function (color, from, to) {
        add(g, 'rect', { x: from, y: 620, width: to - from, height: 7, fill: colors[color] });
        path(g, 'M' + (from + 1) + ' 623.500H' + to, color === 'r' ? '#200000' : '#000020', 2).setAttribute('stroke-dasharray', '1.3 2');
    });

    var up = 'l-4 4h2.500v5h3v-5h2.500z';
    var down = 'l-4 -4h2.500v-5h3v5h2.500z';
    [114, 256, 425, 573.5, 742].forEach(function (x) {
        path(g, 'M' + x + ' 547.500' + up, '#00b8b8', 1.2);
    });
    [202.5, 486.5, 625.5, 912.5].forEach(function (x) {
        path(g, 'M' + x + ' 556.500' + down, '#c89800', 1.2);
    });
}

drawPrice();
drawMacd();
drawSquare();
```
